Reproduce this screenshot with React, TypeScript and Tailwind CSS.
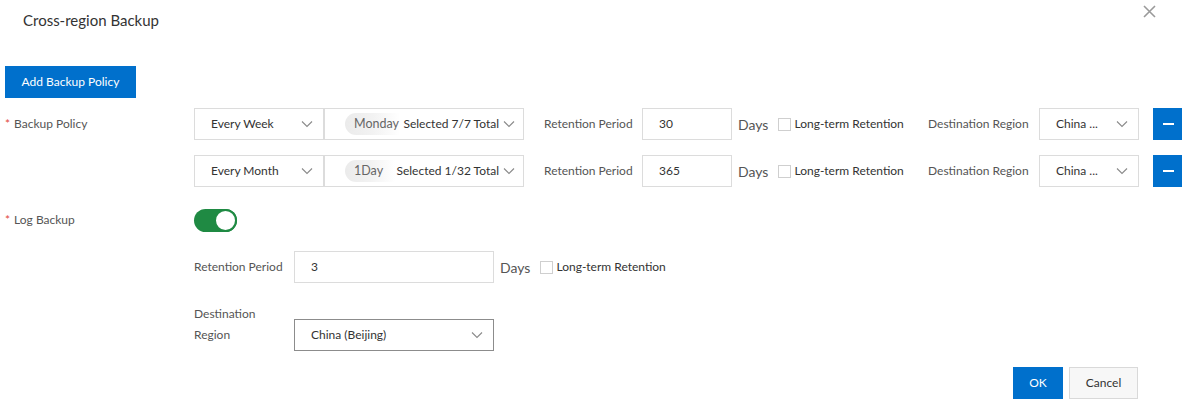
import React from "react";

const Chevron = ({ className = "" }: { className?: string }) => (
  <svg width="12" height="8" viewBox="0 0 12 8" className={className} fill="none">
    <polyline points="1,1.5 6,6.5 11,1.5" stroke="#8a8a8a" strokeWidth="1.1" />
  </svg>
);

const Box = ({ children, className = "" }: { children?: React.ReactNode; className?: string }) => (
  <div className={`flex-none h-[32px] border border-[#dcdcdc] bg-white flex items-center ${className}`}>{children}</div>
);

const Check = () => (
  <span className="inline-block w-[13px] h-[13px] border border-[#cfcfcf] bg-white flex-none" />
);

function PolicyRow({ first, freq, tag, sel, ret, tagW }: { first: boolean; freq: string; tag: string; sel: string; ret: string; tagW: string }) {
  return (
    <div className="flex items-center h-[32px] w-max">
      <div className="w-[189px] flex-none text-[12px] text-[#555]">
        {first ? (
          <span>
            <span className="text-[#e2483d] mr-[4px]">*</span>Backup Policy
          </span>
        ) : null}
      </div>
      <Box className="w-[130px] pl-[16px] pr-[10px] justify-between">
        <span className="text-[12px] text-[#333]">{freq}</span>
        <Chevron />
      </Box>
      <Box className="w-[200px] pl-[20px] pr-[8px]">
        <span
          className={`${tagW} flex-none h-[22px] rounded-l-full overflow-hidden whitespace-nowrap pl-[9px] flex items-center text-[12.5px] text-[#666] bg-gradient-to-r from-[#ebebeb] via-[#f2f2f2] to-white`}
        >
          {tag}
        </span>
        <span className="flex-1 text-right whitespace-nowrap text-[12px] text-[#333]">{sel}</span>
        <Chevron className="ml-[4px] flex-none" />
      </Box>
      <div className="w-[98px] flex-none ml-[20px] text-[12px] text-[#555]">Retention Period</div>
      <Box className="w-[90px] pl-[16px] text-[12px] text-[#333]">{ret}</Box>
      <div className="w-[196px] flex-none flex items-center">
        <span className="ml-[6px] text-[14px] text-[#555]">Days</span>
        <span className="ml-[10px] flex items-center">
          <Check />
        </span>
        <span className="ml-[3px] text-[12px] text-[#333] whitespace-nowrap">Long-term Retention</span>
      </div>
      <div className="w-[111px] flex-none text-[12px] text-[#555] whitespace-nowrap">Destination Region</div>
      <Box className="w-[100px] pl-[16px] pr-[10px] justify-between">
        <span className="text-[12px] text-[#333]">China ...</span>
        <Chevron />
      </Box>
      <button className="ml-[14px] w-[30px] h-[32px] bg-[#0070cc] flex items-center justify-center flex-none">
        <span className="block w-[11px] h-[2px] bg-white" />
      </button>
    </div>
  );
}

export default function App() {
  return (
    <div
      className="w-[1182px] h-[415px] relative bg-white overflow-hidden"
      style={{ fontFamily: "Lato, 'Noto Sans', sans-serif" }}
    >
      <div className="pt-[10px] pl-[23px] text-[15px] leading-[20px] text-[#333]">Cross-region Backup</div>
      <svg className="absolute left-[1143px] top-[5px]" width="13" height="13" viewBox="0 0 13 13">
        <path d="M1 1L12 12M12 1L1 12" stroke="#9a9a9a" strokeWidth="1.6" />
      </svg>
      <div className="pl-[5px]">
        <button className="mt-[36px] h-[32px] w-[131px] bg-[#0070cc] text-white text-[12px] flex items-center justify-center">
          Add Backup Policy
        </button>
        <div className="mt-[10px]">
          <PolicyRow first freq="Every Week" tag="Monday" sel="Selected 7/7 Total" ret="30" tagW="w-[55px]" />
        </div>
        <div className="mt-[15px]">
          <PolicyRow first={false} freq="Every Month" tag="1Day" sel="Selected 1/32 Total" ret="365" tagW="w-[50px]" />
        </div>
        <div className="mt-[21px] flex items-center h-[24px]">
          <div className="w-[189px] flex-none text-[12px] text-[#555]">
            <span className="text-[#e2483d] mr-[4px]">*</span>Log Backup
          </div>
          <div className="w-[43px] h-[23px] rounded-full bg-[#1f8a43] relative">
            <span className="absolute right-0 top-0 w-[23px] h-[23px] rounded-full bg-white border-2 border-[#1f8a43]" />
          </div>
        </div>
        <div className="mt-[19px] flex items-center h-[32px] pl-[189px]">
          <div className="w-[100px] flex-none text-[12px] text-[#555]">Retention Period</div>
          <Box className="w-[200px] pl-[16px] text-[12px] text-[#333]">3</Box>
          <span className="ml-[6px] text-[14px] text-[#555]">Days</span>
          <span className="ml-[10px] flex items-center">
            <Check />
          </span>
          <span className="ml-[3px] text-[12px] text-[#333]">Long-term Retention</span>
        </div>
        <div className="mt-[20px] flex items-start pl-[189px]">
          <div className="w-[100px] flex-none text-[12px] leading-[21px] text-[#555]">
            Destination
            <br />
            Region
          </div>
          <div className="mt-[16px] w-[200px] h-[32px] border border-[#8c8c8c] flex items-center justify-between pl-[16px] pr-[10px]">
            <span className="text-[12px] text-[#333]">China (Beijing)</span>
            <Chevron />
          </div>
        </div>
      </div>
      <div className="mt-[16px] flex justify-end pr-[44px] gap-[6px]">
        <button className="w-[50px] h-[32px] bg-[#0070cc] text-white text-[12px]">OK</button>
        <button className="w-[69px] h-[32px] bg-[#f7f7f7] border border-[#d9d9d9] text-[#333] text-[12px]">Cancel</button>
      </div>
    </div>
  );
}
